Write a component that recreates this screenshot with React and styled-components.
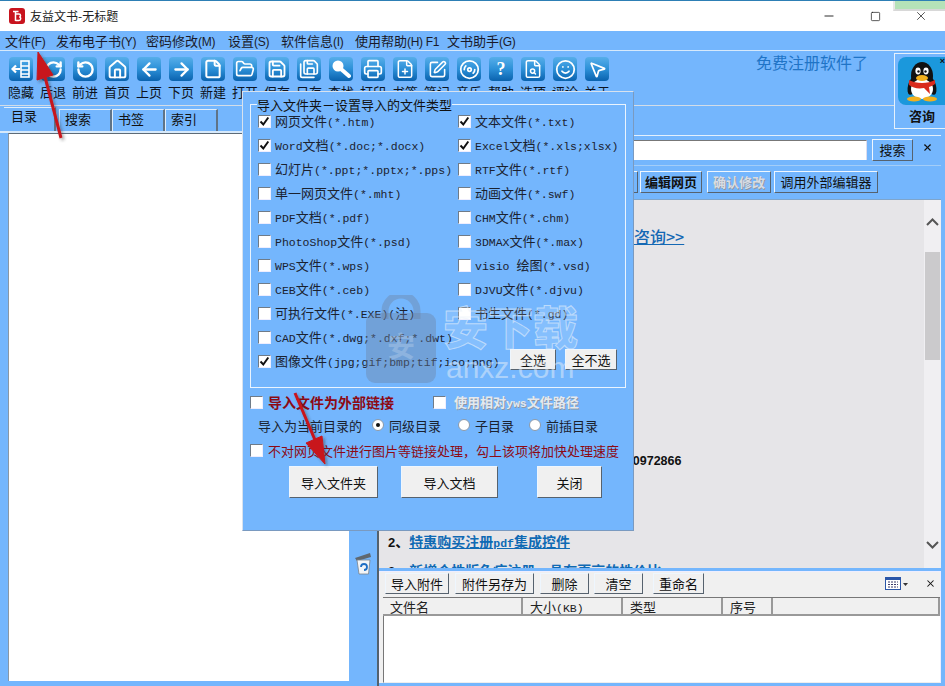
import React from 'react';
import styled, { createGlobalStyle } from 'styled-components';
import { RotateCw, RotateCcw, Home, ArrowLeft, ArrowRight, File, FolderOpen, Save, SaveAll, Printer, FilePlus, SquarePen, Disc3, FileSearch, Smile, MousePointer2, X, Minus, Square } from 'lucide-react';

const BLUE = '#74b6fd';
const CJK = '"Noto Sans CJK SC", sans-serif';

const Global = createGlobalStyle`
  html, body { margin: 0; padding: 0; background: #fff; }
  body { font-family: ${CJK}; font-size: 13px; color: #111; }
`;

const Root = styled.div`
  position: relative; width: 945px; height: 686px; overflow: hidden;
  display: flex; flex-direction: column; background: ${BLUE};
  box-sizing: border-box; border-top: 1px solid #2d7fb5;
  line-height: 1;
`;
const Latin = styled.span`
  font-family: ${p => p.$sans ? '"Liberation Sans"' : '"Liberation Mono"'}, monospace;
  font-size: ${p => p.$sans ? '12px' : '11.5px'};
  ${p => p.$sans && 'letter-spacing: -0.3px;'}
`;
const Tx = ({ children, sans }) => {
  const parts = String(children).split(/([\x20-\x7e]+)/);
  return <>{parts.map((s, i) => s === '' ? null : (/^[\x20-\x7e]+$/.test(s) ? <Latin key={i} $sans={sans}>{s}</Latin> : <span key={i}>{s}</span>))}</>;
};

const TitleBar = styled.div`
  height: 30px; background: #fff; display: flex; align-items: center; padding-left: 9px; flex: none;
`;
const TitleText = styled.div`
  margin-left: 5px; font-size: 12px; color: #222; flex: 1;
`;
const WinBtns = styled.div`display: flex; align-items: center; color: #111; padding-right: 1px;`;
const WinBtn = styled.div`width: 46px; height: 30px; display: flex; align-items: center; justify-content: center;`;

const MenuBar = styled.div`
  height: 19px; flex: none; display: flex; align-items: center; padding-left: 5px;
  border-bottom: 1px solid #d6e9fb; box-sizing: content-box;
`;
const MenuItem = styled.div`
  width: ${p => p.$w}px; font-size: 13px; color: #1a1a2a; white-space: nowrap;
`;

const ToolRow = styled.div`
  height: 55px; flex: none; display: flex; padding-left: 9px; padding-top: 6px; box-sizing: border-box;
  border-bottom: 1px solid #d3dde8;
`;
const ToolItem = styled.div`
  width: 32px; display: flex; flex-direction: column; align-items: flex-start;
`;
const ToolIcon = styled.div`
  width: 24px; height: 24px; border-radius: 4px; display: flex; align-items: center; justify-content: center;
  background: linear-gradient(#57aeea 0%, #2c90d8 50%, #0a62ae 100%); color: #fff;
`;
const ToolLabel = styled.div`
  margin: 3px 0 0 -1px; font-size: 13px; line-height: 16px; width: 28px; white-space: nowrap; color: #0c1220;
`;
const Quest = styled.span`font: bold 18px "Liberation Serif", serif; color: #fff;`;
const Banner = styled.div`
  position: absolute; left: 756px; top: 53px; font-size: 16px; color: #1f74c6; white-space: nowrap;
`;

const Main = styled.div`flex: 1; display: flex; min-height: 0;`;
const LeftPane = styled.div`width: 349px; flex: none; display: flex; flex-direction: column; padding-top: 1px; box-sizing: border-box;`;
const Tabs = styled.div`height: 24px; flex: none; display: flex; padding-left: 4px; border-bottom: 2px solid #d6e9fb;`;
const Tab = styled.div`
  width: ${p => p.$active ? 52 : 53}px; margin-top: ${p => p.$active ? 0 : 2}px;
  box-sizing: border-box; padding-left: ${p => p.$active ? 7 : 5}px; padding-top: ${p => p.$active ? 1 : 2}px;
  font-size: 13px; border-top: 1px solid #dfeefc; border-right: 2px solid #5f7387; border-left: ${p => p.$active ? 0 : 1}px solid #dfeefc;
  color: #111; ${p => p.$active && 'margin-right: 3px;'}
`;
const TreeBox = styled.div`
  flex: 1; margin: 0 0 5px 8px; background: #fff; border-top: 1px solid #5d6b78; border-left: 1px solid #8a97a5;
`;
const Splitter = styled.div`
  width: 30px; flex: none; display: flex; flex-direction: column; align-items: center; justify-content: flex-end;
  padding-bottom: 111px; box-sizing: border-box; border-right: 2px solid #54616d;
`;

const RightPane = styled.div`flex: 1; display: flex; flex-direction: column; padding-top: 29px; margin-right: 4px; min-width: 0;`;
const SearchRow = styled.div`
  height: 31px; flex: none; display: flex; align-items: center; border-top: 1px solid #e3f0fd; border-bottom: 1px solid #a3cdf8;
  box-sizing: border-box; padding: 0 0 2px 60px;
`;
const SearchInput = styled.div`
  flex: 1; height: 19px; background: #fff; border-top: 1px solid #777; border-left: 1px solid #777; border-right: 1px solid #dde; margin-right: 5px;
`;
const Bevel = styled.button`
  appearance: none; padding: 0; margin: 0; font-family: ${CJK}; font-size: ${p => p.$size || 13}px;
  font-weight: ${p => p.$bold ? 700 : 400}; line-height: 1; white-space: nowrap;
  width: ${p => p.$w}px; height: ${p => p.$h || 22}px; flex: none; margin-right: ${p => p.$mr || 0}px;
  background: ${p => p.$light ? '#f0f0f0' : BLUE}; color: ${p => p.$off ? '#d9dce2' : '#111'};
  border: 1px solid; border-color: #eef6fe #56626e #56626e #eef6fe;
  ${p => p.$off && 'text-shadow: 1px 1px 0 #8d99a6;'}
`;
const Close = styled.div`
  width: ${p => p.$w}px; flex: none; display: flex; justify-content: center; color: #111;
  ${p => p.$top && 'padding-bottom: 4px;'}
`;
const EditRow = styled.div`
  height: 34px; flex: none; display: flex; align-items: center; padding: 1px 0 3px 199px; box-sizing: border-box; border-bottom: 1px solid #7fa5cb;
`;
const Content = styled.div`flex: 1; display: flex; min-height: 0; background: #e6e5e8; position: relative;`;
const Article = styled.div`
  flex: 1; overflow: hidden; display: flex; flex-direction: column; padding-left: 9px; min-width: 0;
`;
const BigLink = styled.a`
  margin: 28px 0 0 246px; font-size: 16px; font-weight: 500; color: #1468b4; text-decoration: underline; white-space: nowrap;
`;
const Phone = styled.div`
  margin: 210px 0 0 217px; font: bold 12.5px "Liberation Sans", sans-serif; color: #111; white-space: nowrap;
`;
const ItemLine = styled.div`
  margin-top: ${p => p.$mt}px; font-size: 14px; font-weight: 700; color: #111; white-space: nowrap; flex: none; height: 18px; line-height: 18px;
  & a { color: #0f6ab4; text-decoration: underline; }
`;
const Num = styled.span`font: bold 13px "Liberation Sans", sans-serif;`;
const ScrollBar = styled.div`
  width: 17px; flex: none; background: #f0eff2; display: flex; flex-direction: column; align-items: center; justify-content: space-between;
  padding: 18px 0 19px; box-sizing: border-box; color: #555; position: relative;
`;
const Thumb = styled.div`
  position: absolute; left: 1px; right: 1px; top: 52px; height: 108px; background: #cbcacc;
`;

const Attach = styled.div`
  height: 112px; flex: none; margin-top: 3px; border: 1px solid #eef; border-bottom: none; background: #f0f0f0; display: flex; flex-direction: column; margin-bottom: 3px; box-sizing: border-box;
`;
const AttachBar = styled.div`
  height: 22px; flex: none; display: flex; align-items: center; padding-left: 5px; box-sizing: border-box;
`;
const Spacer = styled.div`flex: 1;`;
const ViewIcon = styled.svg`margin-right: 11px;`;
const ColHead = styled.div`
  height: 19px; flex: none; display: flex; margin: 3px 0 0 3px; border-top: 1px solid #777; border-bottom: 2px solid #999; background: #f0f0f0; box-sizing: border-box;
`;
const Col = styled.div`
  width: ${p => p.$w}px; ${p => p.$grow && 'flex: 1;'} box-sizing: border-box; padding: 2px 0 0 7px; border-right: 2px solid #999; font-size: 13px; color: #222;
`;
const ListBody = styled.div`flex: 1; background: #fff; margin-left: 3px; border-left: 1px solid #777; border-bottom: 1px solid #eee;`;

const Modal = styled.div`
  position: absolute; left: 242px; top: 90px; width: 392px; height: 440px; background: ${BLUE};
  border-top: 1px solid #d8e2ee; border-left: 1px solid #d8e2ee; border-right: 1px solid #7a9ac0; border-bottom: 1px solid #7a9ac0;
  box-sizing: border-box; padding: 6px 7px 0; display: flex; flex-direction: column;
`;
const Group = styled.fieldset`
  margin: 0; padding: 0 0 0 7px; border: 1px solid #eaf4fe; height: 290px; flex: none; box-sizing: border-box; min-width: 0;
`;
const Legend = styled.legend`
  padding: 0; margin-left: -1px; font-size: 13px; color: #111; line-height: 13px; white-space: nowrap;
`;
const Grid = styled.div`
  display: grid; grid-template-columns: 200px 1fr; grid-auto-rows: 24px; margin-top: -2px;
`;
const Cell = styled.div`display: flex; align-items: center; white-space: nowrap; color: #1b2230; font-size: 13px;`;
const Check = styled.div`
  width: 13px; height: 13px; flex: none; background: #fff; margin-right: ${p => p.$mr ?? 5}px; box-sizing: border-box; display: flex; align-items: center; justify-content: center;
  border-top: 1px solid #6f7b88; border-left: 1px solid #6f7b88; border-right: 1px solid #eef; border-bottom: 1px solid #eef;
`;
const SmallBtns = styled.div`display: flex; margin: 0 0 3px 52px; gap: 9px;`;
const OptionRow = styled.div`
  display: flex; align-items: center; height: ${p => p.$h}px; margin-left: ${p => p.$ml || 0}px; margin-top: ${p => p.$mt || 0}px; white-space: nowrap; flex: none;
`;
const BoldRed = styled.span`font-size: 14px; font-weight: 700; color: #8c0a14; margin-right: ${p => p.$mr || 0}px;`;
const Ghost = styled.span`font-size: 13px; font-weight: 700; color: #e4e9ef; text-shadow: 1px 1px 0 #8c98a6;`;
const PlainRed = styled.span`font-size: 13px; color: #8c0a14;`;
const Plain = styled.span`font-size: 13px; color: #1b2230; margin-right: ${p => p.$mr || 0}px;`;
const Radio = styled.div`
  width: 12px; height: 12px; border-radius: 50%; background: #fff; flex: none; margin-right: 5px; border: 1px solid #8c9aaa; box-sizing: border-box;
  display: flex; align-items: center; justify-content: center;
  &::after { content: ''; width: 4px; height: 4px; border-radius: 50%; background: ${p => p.$on ? '#111' : 'transparent'}; }
`;
const DlgBtns = styled.div`display: flex; margin: 2px 0 0 39px;`;

const QQ = styled.div`
  position: absolute; left: 894px; top: 52px; width: 51px; height: 76px; background: ${BLUE}; border: 1px solid #e6f1fc; border-right: none; box-sizing: border-box;
  display: flex; flex-direction: column; align-items: flex-start; padding: 3px 0 0 3px;
`;
const QQLabel = styled.div`margin: 4px 0 0 11px; font-size: 13px; font-weight: 700; color: #111;`;
const QQClose = styled.div`position: absolute; right: 0; top: 2px; color: #111; font: bold 9px "Liberation Sans"; `;
const Strip = styled.div`position: absolute; left: 893px; top: 0; width: 52px; height: 8px; background: #b5e2b8; border-bottom: 2px solid #d8d8d8; border-left: 2px solid #e8e8e8;`;

const Overlay = styled.svg`position: absolute; left: 0; top: 0; pointer-events: none;`;
const Watermark = styled.div`
  position: absolute; left: 365px; top: 294px; display: flex; gap: 6px; pointer-events: none;
`;
const WmText = styled.div`display: flex; flex-direction: column; align-items: flex-start; padding-top: 6px;`;
const WmCn = styled.div`
  font-size: 45px; font-weight: 900; line-height: 50px; color: rgba(255,255,255,.12); -webkit-text-stroke: 1px rgba(235,242,250,.6); white-space: nowrap;
`;
const WmEn = styled.div`
  margin: 0 0 0 3px; font: 400 30px "Liberation Sans", sans-serif; color: rgba(230,238,248,.5);
`;

const tools = [
  ['隐藏', <svg width="20" height="18" viewBox="0 0 20 18" fill="none" stroke="#fff" strokeWidth="1.6"><rect x="10" y="1" width="8" height="16" /><path d="M10 6h8M10 10h8M10 14h8" /><path d="M9 9H2M5 5.5L1.5 9 5 12.5" strokeWidth="2.2" /></svg>],
  ['后退', <RotateCw size={19} strokeWidth={3} />],
  ['前进', <RotateCcw size={19} strokeWidth={3} />],
  ['首页', <Home size={21} strokeWidth={2.2} />],
  ['上页', <ArrowLeft size={21} strokeWidth={2.6} />],
  ['下页', <ArrowRight size={21} strokeWidth={2.6} />],
  ['新建', <File size={20} strokeWidth={2.4} />],
  ['打开', <FolderOpen size={20} strokeWidth={2} />],
  ['保存', <Save size={20} strokeWidth={2.2} />],
  ['另存', <SaveAll size={20} strokeWidth={2} />],
  ['查找', <svg width="20" height="20" viewBox="0 0 20 20"><circle cx="7" cy="7" r="5.5" fill="#fff" /><path d="M10 10l8 7" stroke="#fff" strokeWidth="4" strokeLinecap="round" /></svg>],
  ['打印', <Printer size={20} strokeWidth={2} />],
  ['书签', <FilePlus size={20} strokeWidth={1.8} />],
  ['笔记', <SquarePen size={19} strokeWidth={2} />],
  ['音乐', <Disc3 size={21} strokeWidth={2} />],
  ['帮助', <Quest>?</Quest>],
  ['选项', <FileSearch size={20} strokeWidth={1.8} />],
  ['评论', <Smile size={21} strokeWidth={2} />],
  ['关于', <MousePointer2 size={19} strokeWidth={2.2} />],
];
const menus = [['文件(F)', 51], ['发布电子书(Y)', 90], ['密码修改(M)', 82], ['设置(S)', 53], ['软件信息(I)', 74], ['使用帮助(H) F1', 92], ['文书助手(G)', 70]];
const types = [
  ['网页文件(*.htm)', 1, '文本文件(*.txt)', 1],
  ['Word文档(*.doc;*.docx)', 1, 'Excel文档(*.xls;xlsx)', 1],
  ['幻灯片(*.ppt;*.pptx;*.pps)', 0, 'RTF文件(*.rtf)', 0],
  ['单一网页文件(*.mht)', 0, '动画文件(*.swf)', 0],
  ['PDF文档(*.pdf)', 0, 'CHM文件(*.chm)', 0],
  ['PhotoShop文件(*.psd)', 0, '3DMAX文件(*.max)', 0],
  ['WPS文件(*.wps)', 0, 'visio 绘图(*.vsd)', 0],
  ['CEB文件(*.ceb)', 0, 'DJVU文件(*.djvu)', 0],
  ['可执行文件(*.EXE)(注)', 0, '书生文件(*.gd)', 0],
  ['CAD文件(*.dwg;*.dxf;*.dwt)', 0, null, 0],
];

const Tick = () => <svg width="11" height="11" viewBox="0 0 11 11" fill="none" stroke="#111" strokeWidth="2"><path d="M1.5 5.5l2.8 3 5-7" /></svg>;
const Box = ({ on, mr }) => <Check $mr={mr}>{on ? <Tick /> : null}</Check>;

const TypeCell = ({ text, on }) => text ? <Cell><Box on={on} mr={4} /><span><Tx>{text}</Tx></span></Cell> : <Cell />;

const AppIcon = () => (
  <svg width="16" height="16" viewBox="0 0 16 16"><rect width="16" height="16" rx="3" fill="#c8141e" /><path d="M4 3.5h5.5M6.5 3.5V13M6.5 6h3.5c2 0 2 3 .2 3 2 0 2 3.5-.2 3.5H6.5" stroke="#fff" strokeWidth="1.5" fill="none" /></svg>
);
const Penguin = () => (
  <svg width="50" height="48" viewBox="0 0 50 48">
    <rect width="56" height="48" rx="8" fill="#1b98dc" />
    <ellipse cx="14" cy="29" rx="4" ry="9" fill="#111" transform="rotate(15 14 29)" />
    <ellipse cx="34" cy="29" rx="4" ry="9" fill="#111" transform="rotate(-15 34 29)" />
    <ellipse cx="24" cy="19" rx="11" ry="14" fill="#111" />
    <ellipse cx="24" cy="32" rx="11" ry="10" fill="#fff" />
    <path d="M11 23c7 4 19 4 26 0v4c-3 2-4 2-6 3l1 7-6-6c-6 1-11 0-15-3z" fill="#d92a1c" />
    <ellipse cx="24" cy="21" rx="6" ry="3" fill="#f2b01e" />
    <ellipse cx="20" cy="14" rx="2.6" ry="3.4" fill="#fff" /><ellipse cx="28" cy="14" rx="2.6" ry="3.4" fill="#fff" />
    <circle cx="20.5" cy="14.5" r="1.2" fill="#111" /><circle cx="27.5" cy="14.5" r="1.2" fill="#111" />
    <ellipse cx="16" cy="42" rx="7" ry="2.6" fill="#f2b01e" /><ellipse cx="32" cy="42" rx="7" ry="2.6" fill="#f2b01e" />
  </svg>
);
const Bin = () => (
  <svg width="18" height="24" viewBox="0 0 18 24">
    <path d="M1 7l15-5 1 4L3 10z" fill="#5f6870" />
    <path d="M3 9h13l-1.5 14H5z" fill="#f2f5f8" stroke="#7a838c" strokeWidth=".8" />
    <path d="M7 16a3 3 0 1 1 3 3" stroke="#1f6fc4" strokeWidth="1.8" fill="none" />
  </svg>
);

export default function App() {
  return (
    <Root>
      <Global />
      <TitleBar>
        <AppIcon />
        <TitleText>友益文书-无标题</TitleText>
        <WinBtns>
          <WinBtn><Minus size={14} strokeWidth={1.5} /></WinBtn>
          <WinBtn><Square size={11} strokeWidth={1.5} /></WinBtn>
          <WinBtn><X size={14} strokeWidth={1.2} /></WinBtn>
        </WinBtns>
      </TitleBar>
      <MenuBar>
        {menus.map(([t, w]) => <MenuItem key={t} $w={w}><Tx sans>{t}</Tx></MenuItem>)}
      </MenuBar>
      <ToolRow>
        {tools.map(([t, ic]) => (
          <ToolItem key={t}><ToolIcon>{ic}</ToolIcon><ToolLabel>{t}</ToolLabel></ToolItem>
        ))}
      </ToolRow>
      <Main>
        <LeftPane>
          <Tabs>
            <Tab $active>目录</Tab><Tab>搜索</Tab><Tab>书签</Tab><Tab>索引</Tab>
          </Tabs>
          <TreeBox />
        </LeftPane>
        <Splitter><Bin /></Splitter>
        <RightPane>
          <SearchRow>
            <SearchInput />
            <Bevel $w={41} $h={22}>搜索</Bevel>
            <Close $top $w={28}><X size={11} strokeWidth={2.4} /></Close>
          </SearchRow>
          <EditRow>
            <Bevel $w={60} $mr={2}>预览</Bevel>
            <Bevel $w={62} $bold $mr={5}>编辑网页</Bevel>
            <Bevel $w={64} $off $bold $mr={3}>确认修改</Bevel>
            <Bevel $w={104}>调用外部编辑器</Bevel>
          </EditRow>
          <Content>
            <Article>
              <BigLink>咨询&gt;&gt;</BigLink>
              <Phone>13660972866</Phone>
              <ItemLine $mt={64}><Num>2</Num>、<a><Tx>特惠购买注册pdf集成控件</Tx></a></ItemLine>
              <ItemLine $mt={11}><Num>3</Num>、<a>新增个性版免疫注册，具有更高的性价比</a></ItemLine>
            </Article>
            <ScrollBar>
              <svg width="13" height="8" viewBox="0 0 13 8" fill="none" stroke="#555" strokeWidth="2"><path d="M1 7l5.5-5.5L12 7" /></svg>
              <Thumb />
              <svg width="13" height="8" viewBox="0 0 13 8" fill="none" stroke="#555" strokeWidth="2"><path d="M1 1l5.5 5.5L12 1" /></svg>
            </ScrollBar>
          </Content>
          <Attach>
            <AttachBar>
              <Bevel $light $w={64} $h={21} $mr={6}>导入附件</Bevel>
              <Bevel $light $w={79} $h={21} $mr={6}>附件另存为</Bevel>
              <Bevel $light $w={49} $h={21} $mr={5}>删除</Bevel>
              <Bevel $light $w={49} $h={21} $mr={10}>清空</Bevel>
              <Bevel $light $w={51} $h={21}>重命名</Bevel>
              <Spacer />
              <ViewIcon width="24" height="13" viewBox="0 0 24 13"><rect x=".5" y=".5" width="15" height="12" fill="#fff" stroke="#2a56a8" /><rect x="0" y="0" width="16" height="3" fill="#2a56a8" /><path d="M3 5h10M3 7.5h10M3 10h10" stroke="#3a3a6a" strokeDasharray="2 1" /><path d="M18 6h5l-2.5 3z" fill="#333" /></ViewIcon>
              <Close $w={20}><X size={11} strokeWidth={2.2} /></Close>
            </AttachBar>
            <ColHead>
              <Col $w={140}>文件名</Col>
              <Col $w={100}><Tx>大小(KB)</Tx></Col>
              <Col $w={100}>类型</Col>
              <Col $w={50}>序号</Col>
              <Col $grow />
            </ColHead>
            <ListBody />
          </Attach>
        </RightPane>
      </Main>

      <Banner>免费注册软件了</Banner>
      <Strip />
      <QQ>
        <Penguin />
        <QQClose>×</QQClose>
        <QQLabel>咨询</QQLabel>
      </QQ>

      <Modal>
        <Group>
          <Legend>导入文件夹－设置导入的文件类型</Legend>
          <Grid>
            {types.map(r => (
              <React.Fragment key={r[0]}>
                <TypeCell text={r[0]} on={r[1]} />
                <TypeCell text={r[2]} on={r[3]} />
              </React.Fragment>
            ))}
            <TypeCell text="图像文件(jpg;gif;bmp;tif;ico;png)" on={1} />
            <Cell>
              <SmallBtns>
                <Bevel $light $w={46} $h={21}>全选</Bevel>
                <Bevel $light $w={52} $h={21}>全不选</Bevel>
              </SmallBtns>
            </Cell>
          </Grid>
        </Group>
        <OptionRow $h={24} $mt={2}>
          <Box mr={5} />
          <BoldRed $mr={39}>导入文件为外部链接</BoldRed>
          <Box mr={8} />
          <Ghost><Tx>使用相对yws文件路径</Tx></Ghost>
        </OptionRow>
        <OptionRow $h={22} $ml={8}>
          <Plain $mr={10}>导入为当前目录的</Plain>
          <Radio $on /><Plain $mr={17}>同级目录</Plain>
          <Radio /><Plain $mr={15}>子目录</Plain>
          <Radio /><Plain>前插目录</Plain>
        </OptionRow>
        <OptionRow $h={28}>
          <Box mr={5} />
          <PlainRed>不对网页文件进行图片等链接处理，勾上该项将加快处理速度</PlainRed>
        </OptionRow>
        <DlgBtns>
          <Bevel $light $w={89} $h={32} $mr={23}>导入文件夹</Bevel>
          <Bevel $light $w={97} $h={32} $mr={39}>导入文档</Bevel>
          <Bevel $light $w={65} $h={32}>关闭</Bevel>
        </DlgBtns>
      </Modal>

      <Watermark>
        <svg width="72" height="90" viewBox="0 0 72 90">
          <path d="M20 24V16a16 16 0 0 1 32 0v8" fill="none" stroke="rgba(110,130,160,.4)" strokeWidth="7" />
          <rect x="1" y="18" width="70" height="70" rx="9" fill="rgba(110,130,160,.4)" />
          <text x="36" y="62" fontSize="28" textAnchor="middle" fill="rgba(225,235,246,.25)" fontWeight="700">安</text>
        </svg>
        <WmText>
          <WmCn>安下载</WmCn>
          <WmEn>anxz.com</WmEn>
        </WmText>
      </Watermark>

      <Overlay width="945" height="686" viewBox="0 0 945 686">
        <defs><filter id="s"><feDropShadow dx="2" dy="2" stdDeviation="1.5" floodColor="#333" floodOpacity=".45" /></filter></defs>
        <g filter="url(#s)" fill="#c8141e" stroke="#c8141e">
          <path d="M61 137L45 76" strokeWidth="3" fill="none" />
          <path d="M38 51l-1 28 16-5z" strokeWidth="1" />
          <path d="M295 392l20 47" strokeWidth="3" fill="none" />
          <path d="M325 463l-19-21 16-7z" strokeWidth="1" />
        </g>
      </Overlay>
    </Root>
  );
}
